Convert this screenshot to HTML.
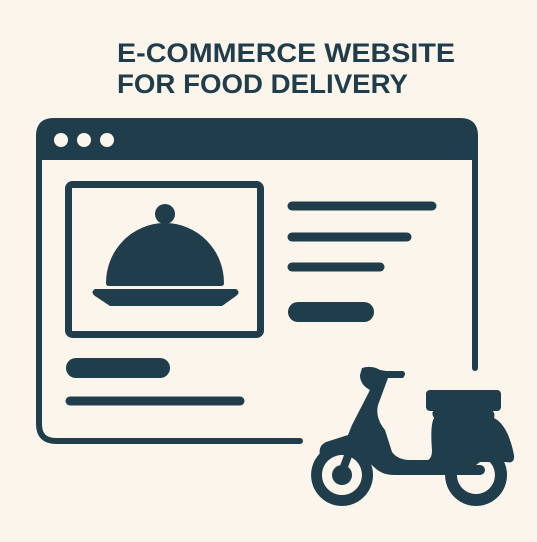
<!DOCTYPE html>
<html><head><meta charset="utf-8"><style>
html,body{margin:0;padding:0;background:#fcf5ec;}
svg{display:block}
</style></head><body>
<svg width="537" height="542" viewBox="0 0 537 542" xmlns="http://www.w3.org/2000/svg">
<rect width="537" height="542" fill="#fcf5ec"/>
<g fill="#1f3d4a" font-family="Liberation Sans, sans-serif" font-weight="bold" font-size="27">
<text x="117" y="62" textLength="338" lengthAdjust="spacingAndGlyphs">E-COMMERCE WEBSITE</text>
<text x="117" y="93" textLength="291" lengthAdjust="spacingAndGlyphs">FOR FOOD DELIVERY</text>
</g>
<g stroke="#1f3d4a" fill="none" stroke-linecap="round">
<path d="M300 441 H56 Q39 441 39 424 V136" stroke-width="6"/>
<path d="M475 136 V368" stroke-width="6"/>
<rect x="68.5" y="184.5" width="192" height="150" rx="4" stroke-width="7"/>
<path d="M292 206 H432" stroke-width="9"/>
<path d="M292 237 H407" stroke-width="9"/>
<path d="M292 267 H380" stroke-width="9"/>
<path d="M298 312 H364" stroke-width="20"/>
<path d="M76 368 H160" stroke-width="20"/>
<path d="M70 401 H240" stroke-width="9"/>
</g>
<g fill="#1f3d4a">
<path d="M36 136 Q36 118 54 118 H460 Q478 118 478 136 V160 H36 Z"/>
<circle cx="61" cy="140" r="7" fill="#fcf5ec"/>
<circle cx="84" cy="140" r="7" fill="#fcf5ec"/>
<circle cx="107" cy="140" r="7" fill="#fcf5ec"/>
<circle cx="165" cy="214" r="10"/>
<path d="M106 283 A59 60 0 0 1 224 283 Q224 286 221 286 H109 Q106 286 106 283 Z"/>
<path d="M95 289 H236 Q241 292 236 296 L222 306 H110 L95 296 Q90 292 95 289 Z"/>
<!-- scooter -->
<rect x="426" y="390" width="75" height="21" rx="4"/>
<path d="M362 368 Q372 365 380 370 L386 371 H403 Q407 373 403 378 H388 L378 405 Q375 418 385 430 L392 452 Q398 460 410 460 H428 Q432 458 432 450 Q430 425 434 418 Q430 412 436 409 H490 Q496 412 494 418 Q508 425 514 455 Q515 464 506 462 L480 462 Q470 470 460 475 H395 Q382 475 375 468 L350 445 Q332 447 320 455 Q318 446 326 442 L348 435 L352 425 L370 390 Q360 385 360 375 Z"/>
<path d="M342 444 A31 31 0 1 0 342.1 444 Z M342 455 A20 20 0 1 1 341.9 455 Z" fill-rule="evenodd"/>
<path d="M476 444 A31 31 0 1 0 476.1 444 Z M476 456 A19 19 0 1 1 475.9 456 Z" fill-rule="evenodd"/>
<circle cx="342" cy="475" r="10"/>
</g>
<path d="M342 472 L352 445" stroke="#1f3d4a" stroke-width="8" stroke-linecap="round"/>
<path d="M460 470 H480" stroke="#1f3d4a" stroke-width="10" stroke-linecap="round"/>
</svg>
</body></html>
